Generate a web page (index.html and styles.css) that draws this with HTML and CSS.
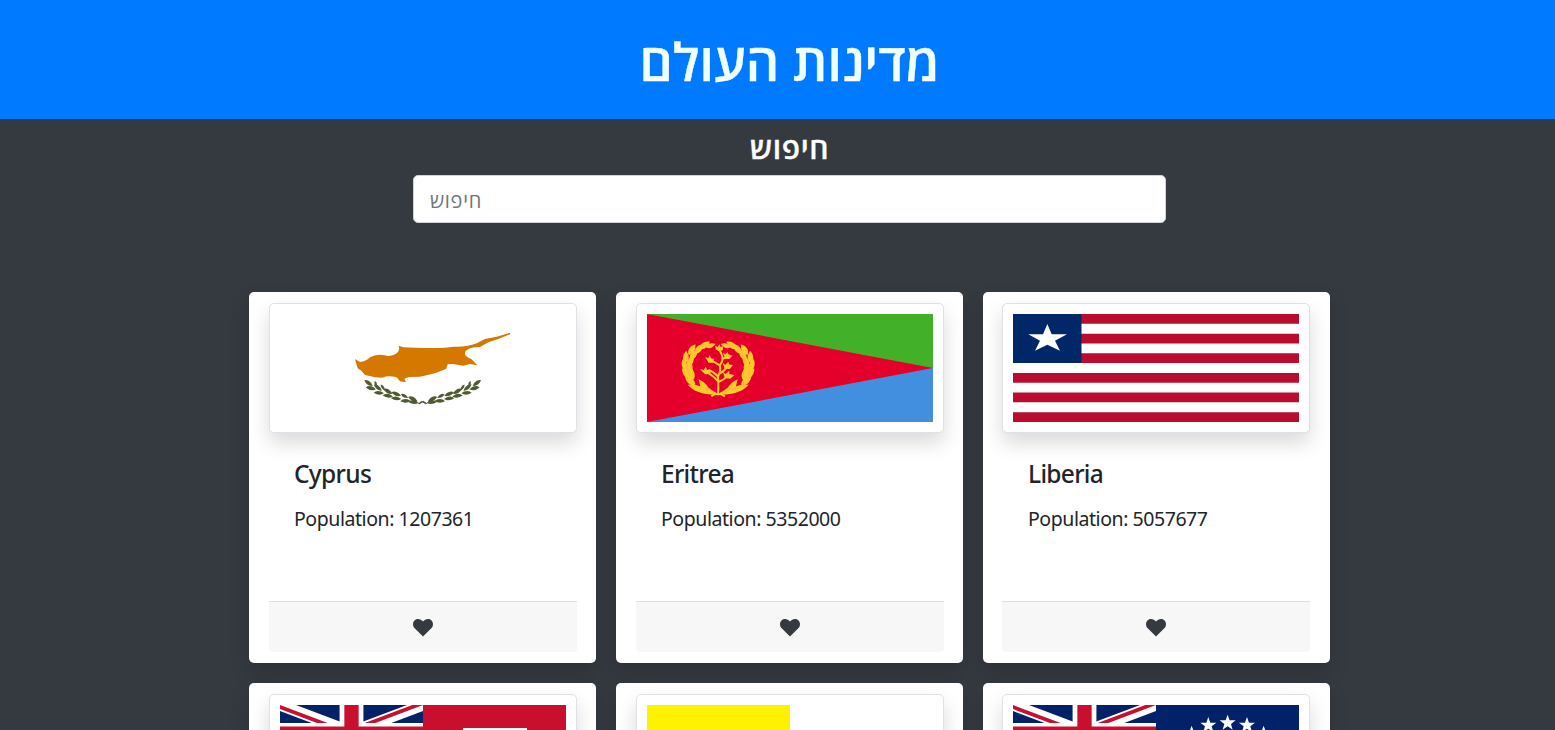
FILE: index.html
```html
<!DOCTYPE html>
<html lang="he">
<head>
<meta charset="utf-8">
<title>מדינות העולם</title>
<link rel="stylesheet" href="styles.css">
</head>
<body>
<svg class="defs" width="0" height="0" aria-hidden="true">
  <defs>
    <path id="leaf" d="M-15 0Q-7-9 7-5L16 0Q2 10-15 0Z"/>
    <path id="petal" d="M0 17C-14 9-12-9-2-21Q16 2 0 17Z"/>
    <path id="star" d="M0-25L6-8H24L10 3L15 20L0 10L-15 20L-10 3L-24-8H-6Z"/>
    <path id="heart" d="M10 17.6L1.7 9.3C-.5 7-.5 3.5 1.5 1.6C4-.7 7.6-.3 10 2.6C12.400-.3 16-.7 18.500 1.600C20.500 3.500 20.500 7 18.300 9.300Z"/>
    <symbol id="jack" viewBox="0 0 60 30" preserveAspectRatio="none">
      <clipPath id="counter"><path d="M30 15h30v15zv15H0zH0V0zV0h30z"/></clipPath>
      <path fill="#012169" d="M0 0h60v30H0z"/>
      <path stroke="#fff" stroke-width="6" d="M0 0l60 30M60 0L0 30"/>
      <path stroke="#c8102e" stroke-width="4" clip-path="url(#counter)" d="M0 0l60 30M60 0L0 30"/>
      <path stroke="#fff" stroke-width="10" d="M30 0v30M0 15h60"/>
      <path stroke="#c8102e" stroke-width="6" d="M30 0v30M0 15h60"/>
    </symbol>
    <g id="branch">
      <use href="#leaf" transform="translate(70 174) rotate(35)"/>
      <use href="#leaf" transform="translate(92 177) rotate(75) scale(.65)"/>
      <use href="#leaf" transform="translate(77 190) rotate(10)"/>
      <use href="#leaf" transform="translate(98 188) rotate(38)"/>
      <use href="#leaf" transform="translate(113 187) rotate(55) scale(.7)"/>
      <use href="#leaf" transform="translate(101 204) rotate(4)"/>
      <use href="#leaf" transform="translate(128 199) rotate(28)"/>
      <use href="#leaf" transform="translate(128 213) rotate(5)"/>
      <use href="#leaf" transform="translate(153 207) rotate(20)"/>
      <use href="#leaf" transform="translate(153 221) rotate(4)"/>
      <use href="#leaf" transform="translate(178 213) rotate(27) scale(.8)"/>
      <use href="#leaf" transform="translate(181 228) rotate(-3)"/>
      <use href="#leaf" transform="translate(203 222) rotate(25)"/>
      <use href="#leaf" transform="translate(205 232) rotate(5)"/>
      <path d="M218 236L231 227L235 231L224 238Z"/>
    </g>
    <g id="wreath">
      <use href="#petal" transform="translate(121 48) rotate(75) scale(.8)"/>
      <use href="#petal" transform="translate(103 48) rotate(58)"/>
      <use href="#petal" transform="translate(87 59) rotate(43)"/>
      <use href="#petal" transform="translate(66 61) rotate(35)"/>
      <use href="#petal" transform="translate(71 77) rotate(38)"/>
      <use href="#petal" transform="translate(49 83) rotate(5)"/>
      <use href="#petal" transform="translate(62 96) rotate(30)"/>
      <use href="#petal" transform="translate(46 107) rotate(-18)"/>
      <use href="#petal" transform="translate(60 119) rotate(20)"/>
      <use href="#petal" transform="translate(50 131) rotate(-35)"/>
      <use href="#petal" transform="translate(67 137) rotate(5)"/>
      <use href="#petal" transform="translate(63 153) rotate(-52)"/>
      <path d="M53 164Q72 161 91 169L86 148Q103 155 116 173Q130 184 142 190L136 194Q77 193 53 164Z"/>
    </g>
  </defs>
</svg>
<div class="page">
  <header class="banner"><h1 class="banner-title" dir="rtl">מדינות העולם</h1></header>
  <main class="content">
    <form class="search">
      <label class="search-label" for="q" dir="rtl">חיפוש</label>
      <input class="search-input" id="q" type="text" placeholder="חיפוש">
    </form>
    <section class="grid">
      <article class="card">
        <div class="thumb">
          <svg class="flag" viewBox="0 0 286 108" preserveAspectRatio="none">
            <g transform="translate(65 11) scale(.3333)">
              <path fill="#d57800" d="M30 102L45 111Q62 110 75 97Q95 86 118 91Q140 97 155 85Q166 76 161 62L175 67Q240 71 300 68L325 65Q365 67 395 55L420 42L455 35L495 23V28L460 42L430 52L405 66Q385 65 372 71Q358 78 360 88Q362 96 380 103L397 121L375 117L355 122L325 117L308 118L303 132L270 145L225 155L192 156L178 161L183 172L165 169L155 157Q130 150 112 158L90 157L60 150L50 138L38 130Z"/>
              <g fill="#4e5b31"><use href="#branch"/><use href="#branch" transform="translate(466) scale(-1 1)"/></g>
            </g>
          </svg>
        </div>
        <div class="card-body"><h2 class="card-title">Cyprus</h2><p class="card-text">Population: 1207361</p></div>
        <footer class="card-footer"><svg class="heart" viewBox="0 0 20 18"><use href="#heart"/></svg></footer>
      </article>
      <article class="card">
        <div class="thumb">
          <svg class="flag" viewBox="0 0 286 108" preserveAspectRatio="none">
            <path fill="#43b02a" d="M0 0h286v54H0z"/><path fill="#418fde" d="M0 54h286v54H0z"/><path fill="#e4002b" d="M0 0l286 54L0 108z"/>
            <g transform="translate(23 16) scale(.3333)" fill="#ffc72c">
              <use href="#wreath"/><use href="#wreath" transform="translate(289) scale(-1 1)"/>
              <path fill="none" stroke="#ffc72c" stroke-width="6" d="M124 199Q141 184 165 199M144 196Q146 162 144 140Q132 125 115 120M144 140Q154 120 149 106Q134 96 119 89M149 106Q163 90 155 74L149 60M147 132Q163 124 172 110M145 156Q162 150 174 136M145 155Q130 137 104 122M154 88Q165 84 175 80"/>
              <path d="M136 47L143 51L148 43L152 51L160 48L158 61L146 64L137 58ZM159 68L166 73L173 66L175 73L188 77L178 87L165 86ZM105 80L114 85L119 76L124 85L132 87L131 98L116 98ZM158 99L166 104L175 95L177 103L189 106L179 117L164 116ZM90 117L101 120L107 110L112 120L122 120L121 133L106 133L98 126ZM159 127L167 132L178 122L178 132L193 135L181 146L165 145Z"/>
            </g>
          </svg>
        </div>
        <div class="card-body"><h2 class="card-title">Eritrea</h2><p class="card-text">Population: 5352000</p></div>
        <footer class="card-footer"><svg class="heart" viewBox="0 0 20 18"><use href="#heart"/></svg></footer>
      </article>
      <article class="card">
        <div class="thumb">
          <svg class="flag" viewBox="0 0 286 108" preserveAspectRatio="none">
            <path stroke="#ba0c2f" stroke-width="9.818" d="M0 4.909h286M0 24.545h286M0 44.182h286M0 63.818h286M0 83.455h286M0 103.091h286"/>
            <path fill="#002868" d="M0 0h68.500v49.091H0z"/>
            <path fill="#fff" transform="translate(-38 -29) scale(.3333)" d="M217 117L230 148H276L240 167L255 197L217 179L180 197L195 167L160 148H204Z"/>
          </svg>
        </div>
        <div class="card-body"><h2 class="card-title">Liberia</h2><p class="card-text">Population: 5057677</p></div>
        <footer class="card-footer"><svg class="heart" viewBox="0 0 20 18"><use href="#heart"/></svg></footer>
      </article>
      <article class="card">
        <div class="thumb">
          <svg class="flag" viewBox="0 0 286 108" preserveAspectRatio="none">
            <path fill="#c8102e" d="M0 0h286v108H0z"/><use href="#jack" width="143" height="54"/>
            <path fill="#fff" d="M183 23h64v36q-5 18-32 26q-27-8-32-26z"/>
          </svg>
        </div>
      </article>
      <article class="card">
        <div class="thumb">
          <svg class="flag" viewBox="0 0 286 108" preserveAspectRatio="none"><path fill="#fff200" d="M0 0h143v108H0z"/></svg>
        </div>
      </article>
      <article class="card">
        <div class="thumb">
          <svg class="flag" viewBox="0 0 286 108" preserveAspectRatio="none">
            <path fill="#012169" d="M0 0h286v108H0z"/><use href="#jack" width="143" height="54"/>
            <g fill="#fff" transform="translate(-38 -115) scale(.3333)">
              <use href="#star" x="758" y="399"/><use href="#star" x="700" y="406"/><use href="#star" x="816" y="406"/><use href="#star" x="650" y="432"/><use href="#star" x="866" y="432"/>
            </g>
          </svg>
        </div>
      </article>
    </section>
  </main>
</div>
</body>
</html>
```
FILE: styles.css
```css
*, *::before, *::after { box-sizing: border-box; }
html, body { margin: 0; height: 100%; overflow: hidden; }
body {
  background: #343a40;
  color: #212529;
  font: 400 20px/1.5 "Noto Sans", "Open Sans", "DejaVu Sans", sans-serif;
}
.defs { display: block; }
.page { width: 1579px; height: 730px; overflow: hidden; }
.banner {
  height: 119px;
  padding-top: 21px;
  background: #007bff;
  text-align: center;
}
.banner-title {
  margin: 0;
  color: #f0ffff;
  font: 600 52px/80px "Open Sans", sans-serif;
  -webkit-text-stroke: .4px #f0ffff;
}
.content { width: 1081px; margin: 0 auto; }
.search {
  display: flex;
  flex-direction: column;
  width: 753px;
  margin: 0 auto 69px;
  padding-top: 10px;
}
.search-label {
  height: 46px;
  color: #fff;
  font: 600 30px/38px "Open Sans", sans-serif;
  letter-spacing: .7px;
  text-align: center;
  -webkit-text-stroke: .3px #fff;
}
.search-input {
  height: 48px;
  padding: 3px 16px 0;
  border: 1px solid #ced4da;
  border-radius: 5px;
  background: #fff;
  font: 400 20px/30px "Open Sans", sans-serif;
  letter-spacing: .7px;
}
.search-input::placeholder { color: #6c757d; opacity: 1; }
.grid {
  display: grid;
  grid-template-columns: repeat(3, 347px);
  gap: 20px;
}
.card {
  display: flex;
  flex-direction: column;
  height: 371px;
  padding: 11px 19px 11px 20px;
  border-radius: 5px;
  background: #fff;
  box-shadow: 0 10px 20px rgba(0, 0, 0, .15);
}
.card:nth-child(3n) { padding-left: 19px; padding-right: 20px; }
.card:nth-child(3n) .card-body { padding-left: 26px; }
.thumb {
  width: 308px;
  height: 130px;
  padding: 10px;
  border: 1px solid #dee2e6;
  border-radius: 5px;
  background: #fff;
  box-shadow: 0 10px 20px rgba(0, 0, 0, .15);
}
.flag { display: block; width: 286px; height: 108px; }
.card-body { flex: 1; padding: 26px 25px 0; }
.card-title {
  margin: 0 0 14px;
  font-size: 24.500px;
  font-weight: 550;
  line-height: 30px;
  letter-spacing: -.7px;
}
.card-text { margin: 0; font-size: 19.500px; line-height: 31px; letter-spacing: -.44px; }
.card-footer {
  display: flex;
  justify-content: center;
  width: 308px;
  height: 51px;
  padding-top: 17px;
  border-top: 1px solid #dfdfdf;
  border-radius: 0 0 4px 4px;
  background: #f7f7f7;
}
.heart { width: 20px; height: 18px; fill: #343a40; }
```
